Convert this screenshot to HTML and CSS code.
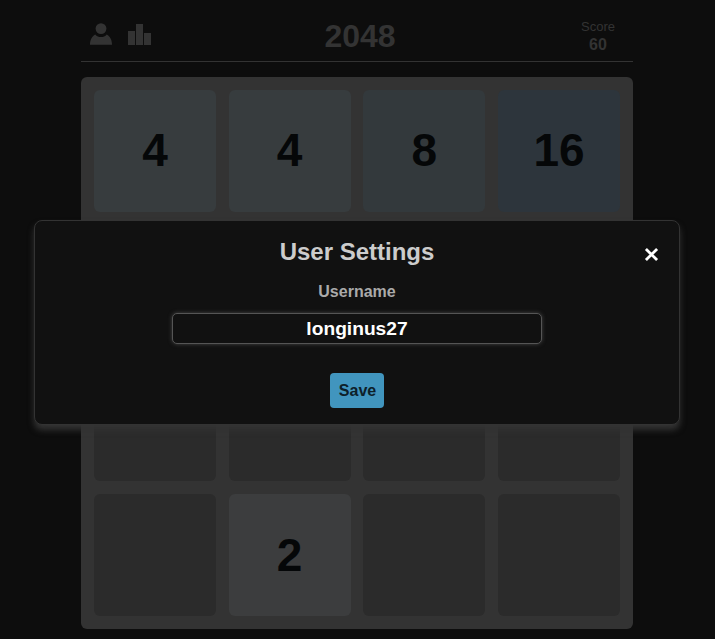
FILE: index.html
```
<!DOCTYPE html>
<html lang="en">
<head>
<meta charset="utf-8">
<title>2048</title>
<link rel="stylesheet" href="styles.css">
</head>
<body>
<main class="game">
  <header class="header">
    <div class="actions">
      <svg class="icon-user" viewBox="0 0 22 22"><circle cx="11" cy="5.6" r="5.4"/><path d="M0 21.7C0 16.5 2 13.2 5.2 11.4C6.8 13.2 8.7 14 11 14S15.2 13.2 16.8 11.4C20 13.2 22 16.5 22 21.7Z"/></svg>
      <svg class="icon-stats" viewBox="0 0 23 21"><path d="M0 7h7V21H0zM8 0h7V21H8zM16 9h7V21h-7z"/></svg>
    </div>
    <h1 class="logo">2048</h1>
    <div class="score"><span>Score</span><strong>60</strong></div>
  </header>
  <section class="board">
    <div class="tile tile-4">4</div><div class="tile tile-4">4</div><div class="tile tile-8">8</div><div class="tile tile-16">16</div>
    <div class="tile"></div><div class="tile"></div><div class="tile"></div><div class="tile"></div>
    <div class="tile"></div><div class="tile"></div><div class="tile"></div><div class="tile"></div>
    <div class="tile"></div><div class="tile tile-2">2</div><div class="tile"></div><div class="tile"></div>
  </section>
</main>
<section class="modal" role="dialog">
  <button class="close" aria-label="Close"><svg viewBox="0 0 14 14"><path d="M1.8 1.8l10.4 10.4M12.2 1.8L1.8 12.2"/></svg></button>
  <h2 class="modal-title">User Settings</h2>
  <label class="label" for="username">Username</label>
  <input class="input" id="username" type="text" value="longinus27">
  <button class="save">Save</button>
</section>
</body>
</html>
```
FILE: styles.css
```
* { box-sizing: border-box; }
body {
  margin: 0;
  height: 639px;
  overflow: hidden;
  background: #0d0d0d;
  color: #333;
  font-family: "Liberation Sans", Arial, sans-serif;
}
.game { width: 552px; margin-left: 81px; }
.header {
  display: grid;
  grid-template-columns: 1fr auto 1fr;
  height: 62px;
  padding: 0 18px 0 9px;
  border-bottom: 1px solid #333;
}
.actions { display: flex; align-items: flex-start; gap: 16px; padding-top: 23px; }
.actions svg { fill: #333; }
.icon-user { width: 22px; height: 22px; }
.icon-stats { width: 23px; height: 21px; margin-top: 1px; }
.logo { margin: 18px 0 0 15px; font-size: 32px; line-height: 36px; }
.score {
  display: flex;
  flex-direction: column;
  justify-self: end;
  align-items: center;
  padding-top: 18px;
  font-size: 13px;
  line-height: 18px;
}
.score strong { font-size: 16px; }
.board {
  display: grid;
  grid-template-columns: repeat(4, 122px);
  grid-template-rows: repeat(4, 122px);
  place-content: space-between;
  height: 552px;
  margin-top: 15px;
  padding: 13px;
  border-radius: 6px;
  background: #333;
}
.tile {
  display: grid;
  place-items: center;
  padding-bottom: 2px;
  border-radius: 6px;
  background: #2b2b2b;
  color: #050708;
  font-size: 46px;
  font-weight: bold;
}
.tile-2 { padding-bottom: 0; background: #3c3d3e; }
.tile-4 { background: #373c3e; }
.tile-8 { background: #33393c; }
.tile-16 { background: #2d353c; }
.modal {
  position: absolute;
  left: 34px;
  top: 220px;
  display: flex;
  flex-direction: column;
  align-items: center;
  width: 646px;
  height: 205px;
  padding-top: 17px;
  border: 1px solid #333;
  border-radius: 8px;
  background: #111;
  box-shadow: 0 5px 6px #333;
}
.close {
  position: absolute;
  top: 26px;
  right: 20px;
  width: 15px;
  height: 15px;
  padding: 0;
  border: 0;
  background: none;
}
.close svg { display: block; fill: none; stroke: #fff; stroke-width: 2.6; }
.modal-title { margin: 0; color: #ccc; font-size: 24px; line-height: 28px; }
.label { margin-top: 17px; color: #aaa; font-size: 16px; font-weight: bold; line-height: 18px; }
.input {
  width: 370px;
  height: 31px;
  margin-top: 12px;
  padding: 1px 0 0;
  border: 1px solid #555;
  border-radius: 5px;
  outline: 0;
  background: #111;
  box-shadow: 0 0 4px #444;
  color: #fff;
  font: bold 19.2px "Liberation Sans", Arial, sans-serif;
  text-align: center;
}
.save {
  width: 54px;
  height: 35px;
  margin-top: 29px;
  padding: 0 0 0 1px;
  border: 0;
  border-radius: 4px;
  background: #4195be;
  color: #0d2029;
  font: bold 16px "Liberation Sans", Arial, sans-serif;
}
```
